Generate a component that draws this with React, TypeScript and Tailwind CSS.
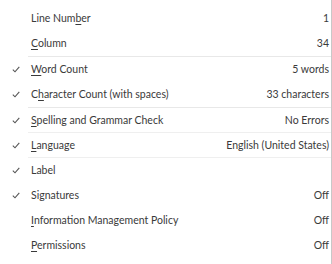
const rows: (
  | { sep: "gap" | "flush" }
  | { sep?: undefined; label: React.ReactNode; value?: string; checked?: boolean }
)[] = [
  { label: <>Line Num<u>b</u>er</>, value: "1" },
  { label: <><u>C</u>olumn</>, value: "34" },
  { sep: "gap" },
  { label: <><u>W</u>ord Count</>, value: "5 words", checked: true },
  { label: <>C<u>h</u>aracter Count (with spaces)</>, value: "33 characters", checked: true },
  { sep: "gap" },
  { label: <><u>S</u>pelling and Grammar Check</>, value: "No Errors", checked: true },
  { sep: "flush" },
  { label: <><u>L</u>anguage</>, value: "English (United States)", checked: true },
  { sep: "flush" },
  { label: <>Label</>, checked: true },
  { label: <>Signatures</>, value: "Off", checked: true },
  { label: <><u>I</u>nformation Management Policy</>, value: "Off" },
  { label: <><u>P</u>ermissions</>, value: "Off" },
];

function Check() {
  return (
    <svg width="8" height="7" viewBox="0 0 8 7" className="text-[#555]">
      <path d="M0.8 3.6 L3 5.8 L7.3 0.8" fill="none" stroke="currentColor" strokeWidth="1.1" />
    </svg>
  );
}

export default function App() {
  return (
    <div className="w-[332px] h-[264px] bg-white overflow-hidden">
      <div className="h-full border-r border-[#c8c8c8] pt-[6px] text-[10.5px] text-[#3a3a3a] [font-family:Lato,sans-serif]">
        {rows.map((r, i) =>
          r.sep ? (
            <div
              key={i}
              className={
                r.sep === "gap"
                  ? "ml-[28px] h-px bg-[#e8e8e8]"
                  : "ml-[28px] -mt-px h-px bg-[#efefef] relative"
              }
            />
          ) : (
            <div key={i} className="flex items-center h-[25px] pr-[2px]">
              <div className="w-[31px] flex justify-start pl-[12px]">
                {r.checked && <Check />}
              </div>
              <div className="flex-1 whitespace-nowrap [&_u]:underline-offset-2">{r.label}</div>
              {r.value && <div className="whitespace-nowrap">{r.value}</div>}
            </div>
          )
        )}
      </div>
    </div>
  );
}
